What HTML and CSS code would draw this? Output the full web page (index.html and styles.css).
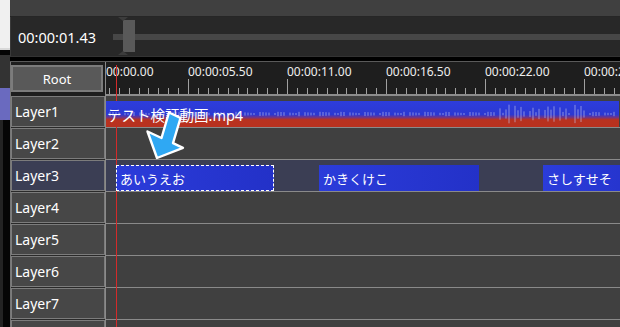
FILE: index.html
```html
<!DOCTYPE html>
<html lang="ja">
<head>
  <meta charset="UTF-8" />
  <title>Timeline</title>
  <link rel="stylesheet" href="styles.css">
</head>
<body>
  <div class="side">
    <div class="side-top"></div>
    <div class="side-gap"></div>
    <div class="side-mid"></div>
    <div class="side-accent"></div>
    <div class="side-rest"></div>
  </div>

  <div class="main">
    <div class="preview-bar"></div>
    <div class="seek">
      <div class="time">00:00:01.43</div>
      <div class="slider">
        <div class="slider-track"></div>
        <div class="slider-thumb"></div>
      </div>
    </div>
    <div class="spacer"></div>

    <div class="timeline">
      <div class="row ruler-row">
        <div class="head"><button class="root-btn">Root</button></div>
        <div class="ruler" id="ruler"></div>
      </div>

      <div class="row">
        <div class="head"><div class="layer-box">Layer1</div></div>
        <div class="track">
          <div class="clip video" style="left: 0; width: 513px;">
            <svg class="wave" id="wave" width="513" height="26"></svg>
            <span class="clip-name">テスト検証動画.mp4</span>
          </div>
        </div>
      </div>

      <div class="row">
        <div class="head"><div class="layer-box">Layer2</div></div>
        <div class="track"></div>
      </div>

      <div class="row active">
        <div class="head"><div class="layer-box">Layer3</div></div>
        <div class="track">
          <div class="clip text selected" style="left: 10px; width: 158px;">あいうえお</div>
          <div class="clip text" style="left: 213px; width: 160px;">かきくけこ</div>
          <div class="clip text" style="left: 437px; width: 120px;">さしすせそ</div>
        </div>
      </div>

      <div class="row">
        <div class="head"><div class="layer-box">Layer4</div></div>
        <div class="track"></div>
      </div>

      <div class="row">
        <div class="head"><div class="layer-box">Layer5</div></div>
        <div class="track"></div>
      </div>

      <div class="row">
        <div class="head"><div class="layer-box">Layer6</div></div>
        <div class="track"></div>
      </div>

      <div class="row">
        <div class="head"><div class="layer-box">Layer7</div></div>
        <div class="track"></div>
      </div>

      <div class="row">
        <div class="head"><div class="layer-box">Layer8</div></div>
        <div class="track"></div>
      </div>

      <div class="playhead"></div>
    </div>
  </div>

  <svg class="pointer" width="50" height="60" viewBox="140 105 50 60">
    <polygon points="169,112.5 180.5,118 173,143.2 183,147.8 157,158 147.5,131.5 161.5,138"
      fill="#2fa8f3" stroke="#fff" stroke-width="2.4" stroke-linejoin="round" />
  </svg>

  <script>
    // ruler: one segment per 5.5s, 10 ticks each
    const labels = ['00:00:00.00', '00:00:05.50', '00:00:11.00', '00:00:16.50', '00:00:22.00', '00:00:27.50'];
    const ruler = document.getElementById('ruler');

    labels.forEach(text => {
      const seg = document.createElement('div');
      seg.className = 'seg';

      const label = document.createElement('div');
      label.className = 'seg-label';
      label.textContent = text;

      const ticks = document.createElement('div');
      ticks.className = 'ticks';
      for (let i = 0; i < 10; i++) {
        const t = document.createElement('span');
        t.className = i === 0 ? 'tick major' : 'tick';
        ticks.appendChild(t);
      }

      seg.append(label, ticks);
      ruler.appendChild(seg);
    });

    // rough audio waveform for the video clip
    const wave = document.getElementById('wave');
    const ns = 'http://www.w3.org/2000/svg';
    for (let x = 0; x < 513; x += 3) {
      if ((x * 7) % 5 === 0) continue;
      let amp = 1 + ((x * 37) % 7) / 5;
      if (x > 390 && x < 480) amp += ((x * 53) % 11) / 1.4;
      const r = document.createElementNS(ns, 'rect');
      r.setAttribute('x', x);
      r.setAttribute('y', 13 - amp);
      r.setAttribute('width', 2);
      r.setAttribute('height', amp * 2);
      wave.appendChild(r);
    }
  </script>
</body>
</html>
```

FILE: styles.css
```css
body {
  margin: 0;
  width: 620px;
  height: 327px;
  overflow: hidden;
  display: flex;
  background-color: #1e1e1e;
  color: #fff;
  font-family: "Noto Sans", "Noto Sans CJK JP", sans-serif;
}

/* strip of the neighbouring window */
.side {
  width: 10px;
  display: flex;
  flex-direction: column;
}

.side-top {
  height: 48px;
  background-color: #f0f0f0;
  border-bottom: 2px solid #d8d8d8;
}

.side-gap {
  height: 5px;
  background-color: #050505;
}

.side-mid {
  height: 33px;
  background-color: #333;
}

.side-accent {
  height: 32px;
  background-color: #6a6abf;
}

.side-rest {
  flex: 1;
  background: linear-gradient(to right, #232323 0 3px, #050505 3px 10px);
}

.main {
  flex: 1;
  display: flex;
  flex-direction: column;
  min-width: 0;
}

.preview-bar {
  height: 16px;
  background-color: #404040;
  border-bottom: 1px solid #262626;
}

.seek {
  height: 39px;
  display: flex;
  align-items: center;
  background-color: #282828;
  border-left: 1px solid #3a3a3a;
  border-bottom: 1px solid #333;
}

.time {
  width: 95px;
  padding-left: 7px;
  font-size: 14.5px;
}

.slider {
  flex: 1;
  height: 100%;
  position: relative;
  display: flex;
  align-items: center;
}

.slider-track {
  flex: 1;
  height: 6px;
  background-color: #474747;
}

.slider-thumb {
  position: absolute;
  left: 10px;
  top: 3px;
  width: 12px;
  height: 32px;
  background-color: #595959;
}

.slider-thumb::before,
.slider-thumb::after {
  content: "";
  position: absolute;
  left: -5px;
  border-left: 5px solid transparent;
  border-right: 5px solid transparent;
}

.slider-thumb::before {
  top: -3px;
  border-top: 4px solid #3c3c3c;
}

.slider-thumb::after {
  bottom: -3px;
  border-bottom: 4px solid #3c3c3c;
}

.spacer {
  height: 4px;
  background-color: #000;
}

.timeline {
  flex: 1;
  position: relative;
  overflow: hidden;
  background-color: #1e1e1e;
  border-top: 1px solid #5a5a5a;
}

.row {
  display: flex;
  height: 32px;
}

.ruler-row {
  height: 34px;
}

.head {
  width: 96px;
  box-sizing: border-box;
  padding: 0 0 1px 0;
  border-left: 1px solid #777;
  border-right: 1px solid #8a8a8a;
  background-color: #2a2a2a;
}

.ruler-row .head {
  background-color: #1e1e1e;
  padding: 3px 0 0 0;
}

.root-btn {
  display: block;
  width: 92px;
  height: 27px;
  margin: 0;
  padding: 0;
  border: 2px solid #7c7c7c;
  background-color: #595959;
  color: #fff;
  font-family: "Noto Sans", sans-serif;
  font-size: 13px;
}

.ruler {
  flex: 1;
  display: flex;
  overflow: hidden;
  border-bottom: 2px solid #8c8c8c;
}

.seg {
  flex: none;
  width: 99px;
  display: flex;
  flex-direction: column;
  justify-content: space-between;
}

.seg:first-child {
  margin-left: -17px;
}

.seg-label {
  padding-top: 3px;
  font-size: 12px;
  line-height: 14px;
  color: #eee;
  white-space: nowrap;
}

.ticks {
  height: 15px;
  display: flex;
  align-items: flex-end;
}

.tick {
  flex: 1;
  height: 6px;
  border-left: 1px solid #a0a0a0;
}

.tick.major {
  height: 15px;
}

.layer-box {
  height: 31px;
  box-sizing: border-box;
  display: flex;
  align-items: center;
  padding-left: 3px;
  border: 1px solid #7c7c7c;
  background-color: #474747;
  font-size: 14px;
}

.track {
  flex: 1;
  position: relative;
  background-color: #404040;
  border-bottom: 1px solid #8a8a8a;
}

.row.active .layer-box,
.row.active .track {
  background-color: #3b3e54;
}

.clip {
  position: absolute;
  top: 5px;
  bottom: 0;
  z-index: 2;
  box-sizing: border-box;
  display: flex;
  align-items: center;
  padding-left: 4px;
  overflow: hidden;
  white-space: nowrap;
  font-size: 13px;
}

.clip.text {
  background: linear-gradient(to right, #2b3cda, #2331c8);
}

.clip.selected {
  border: 1px dashed #fff;
  padding-left: 3px;
}

.clip.video {
  padding-left: 1px;
  font-size: 14.5px;
  background: linear-gradient(to bottom, #2d3ddc 0%, #2b38d2 52%, #6a3590 62%, #b8321f 72%, #b8311f 100%);
}

.wave {
  position: absolute;
  left: 0;
  top: 0;
  fill: rgba(195, 200, 240, 0.3);
}

.clip-name {
  position: relative;
}

.playhead {
  position: absolute;
  left: 106px;
  top: 3px;
  bottom: 0;
  width: 1px;
  background-color: #d42a2a;
  z-index: 1;
}

.pointer {
  position: absolute;
  left: 140px;
  top: 105px;
  z-index: 5;
}
```
